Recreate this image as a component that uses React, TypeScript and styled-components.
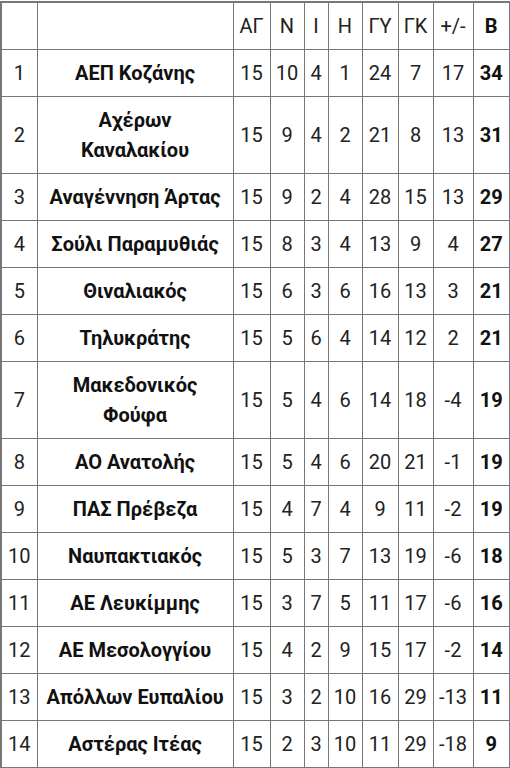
import React from "react";
import styled, { createGlobalStyle } from "styled-components";

const GlobalStyle = createGlobalStyle`
  html, body {
    margin: 0;
    padding: 0;
    background: #fff;
  }
  body {
    font-family: Roboto, "Noto Sans", "Liberation Sans", sans-serif;
  }
`;

type Team = {
  pos: number;
  name: string;
  played: number;
  w: number;
  d: number;
  l: number;
  gf: number;
  ga: number;
  diff: number;
  pts: number;
};

const teams: Team[] = [
  { pos: 1, name: "ΑΕΠ Κοζάνης", played: 15, w: 10, d: 4, l: 1, gf: 24, ga: 7, diff: 17, pts: 34 },
  { pos: 2, name: "Αχέρων Καναλακίου", played: 15, w: 9, d: 4, l: 2, gf: 21, ga: 8, diff: 13, pts: 31 },
  { pos: 3, name: "Αναγέννηση Άρτας", played: 15, w: 9, d: 2, l: 4, gf: 28, ga: 15, diff: 13, pts: 29 },
  { pos: 4, name: "Σούλι Παραμυθιάς", played: 15, w: 8, d: 3, l: 4, gf: 13, ga: 9, diff: 4, pts: 27 },
  { pos: 5, name: "Θιναλιακός", played: 15, w: 6, d: 3, l: 6, gf: 16, ga: 13, diff: 3, pts: 21 },
  { pos: 6, name: "Τηλυκράτης", played: 15, w: 5, d: 6, l: 4, gf: 14, ga: 12, diff: 2, pts: 21 },
  { pos: 7, name: "Μακεδονικός Φούφα", played: 15, w: 5, d: 4, l: 6, gf: 14, ga: 18, diff: -4, pts: 19 },
  { pos: 8, name: "ΑΟ Ανατολής", played: 15, w: 5, d: 4, l: 6, gf: 20, ga: 21, diff: -1, pts: 19 },
  { pos: 9, name: "ΠΑΣ Πρέβεζα", played: 15, w: 4, d: 7, l: 4, gf: 9, ga: 11, diff: -2, pts: 19 },
  { pos: 10, name: "Ναυπακτιακός", played: 15, w: 5, d: 3, l: 7, gf: 13, ga: 19, diff: -6, pts: 18 },
  { pos: 11, name: "ΑΕ Λευκίμμης", played: 15, w: 3, d: 7, l: 5, gf: 11, ga: 17, diff: -6, pts: 16 },
  { pos: 12, name: "ΑΕ Μεσολογγίου", played: 15, w: 4, d: 2, l: 9, gf: 15, ga: 17, diff: -2, pts: 14 },
  { pos: 13, name: "Απόλλων Ευπαλίου", played: 15, w: 3, d: 2, l: 10, gf: 16, ga: 29, diff: -13, pts: 11 },
  { pos: 14, name: "Αστέρας Ιτέας", played: 15, w: 2, d: 3, l: 10, gf: 11, ga: 29, diff: -18, pts: 9 },
];

const colWidths = [36, 196, 37, 34, 24, 34, 36, 35, 40, 37];
const headers = ["", "", "ΑΓ", "Ν", "Ι", "Η", "ΓΥ", "ΓΚ", "+/-", "Β"];

const StandingsTable = () => {
  return (
    <Table>
      <colgroup>
        {colWidths.map((w, i) => (
          <col key={i} style={{ width: w }} />
        ))}
      </colgroup>
      <thead>
        <tr>
          {headers.map((h, i) => (
            <Head key={i} $bold={h === "Β"}>
              {h}
            </Head>
          ))}
        </tr>
      </thead>
      <tbody>
        {teams.map((t) => (
          <tr key={t.pos}>
            <Cell>{t.pos}</Cell>
            <NameCell>{t.name}</NameCell>
            <Cell>{t.played}</Cell>
            <Cell>{t.w}</Cell>
            <Cell>{t.d}</Cell>
            <Cell>{t.l}</Cell>
            <Cell>{t.gf}</Cell>
            <Cell>{t.ga}</Cell>
            <Cell>{t.diff}</Cell>
            <Cell $bold>{t.pts}</Cell>
          </tr>
        ))}
      </tbody>
    </Table>
  );
};

const App = () => {
  return (
    <>
      <GlobalStyle />
      <Wrapper>
        <StandingsTable />
      </Wrapper>
    </>
  );
};

export default App;

const Wrapper = styled.div`
  width: 510px;
  padding-top: 1px;
`;

const Table = styled.table`
  width: 509px;
  table-layout: fixed;
  border-collapse: collapse;
  border: 2px solid #777;
  color: #222;
  font-size: 20px;
  line-height: 30px;
`;

const Head = styled.th<{ $bold?: boolean }>`
  height: 30px;
  padding: 8px 0;
  border: 1px solid #777;
  text-align: center;
  vertical-align: middle;
  font-weight: ${(p) => (p.$bold ? 700 : 400)};
  color: ${(p) => (p.$bold ? "#111" : "#222")};
`;

const Cell = styled.td<{ $bold?: boolean }>`
  padding: 8px 0;
  border: 1px solid #777;
  text-align: center;
  vertical-align: middle;
  white-space: nowrap;
  font-weight: ${(p) => (p.$bold ? 700 : 400)};
  color: ${(p) => (p.$bold ? "#111" : "#222")};
`;

const NameCell = styled.td`
  padding: 8px 8px;
  border: 1px solid #777;
  text-align: center;
  vertical-align: middle;
  font-weight: 700;
  color: #111;
`;
